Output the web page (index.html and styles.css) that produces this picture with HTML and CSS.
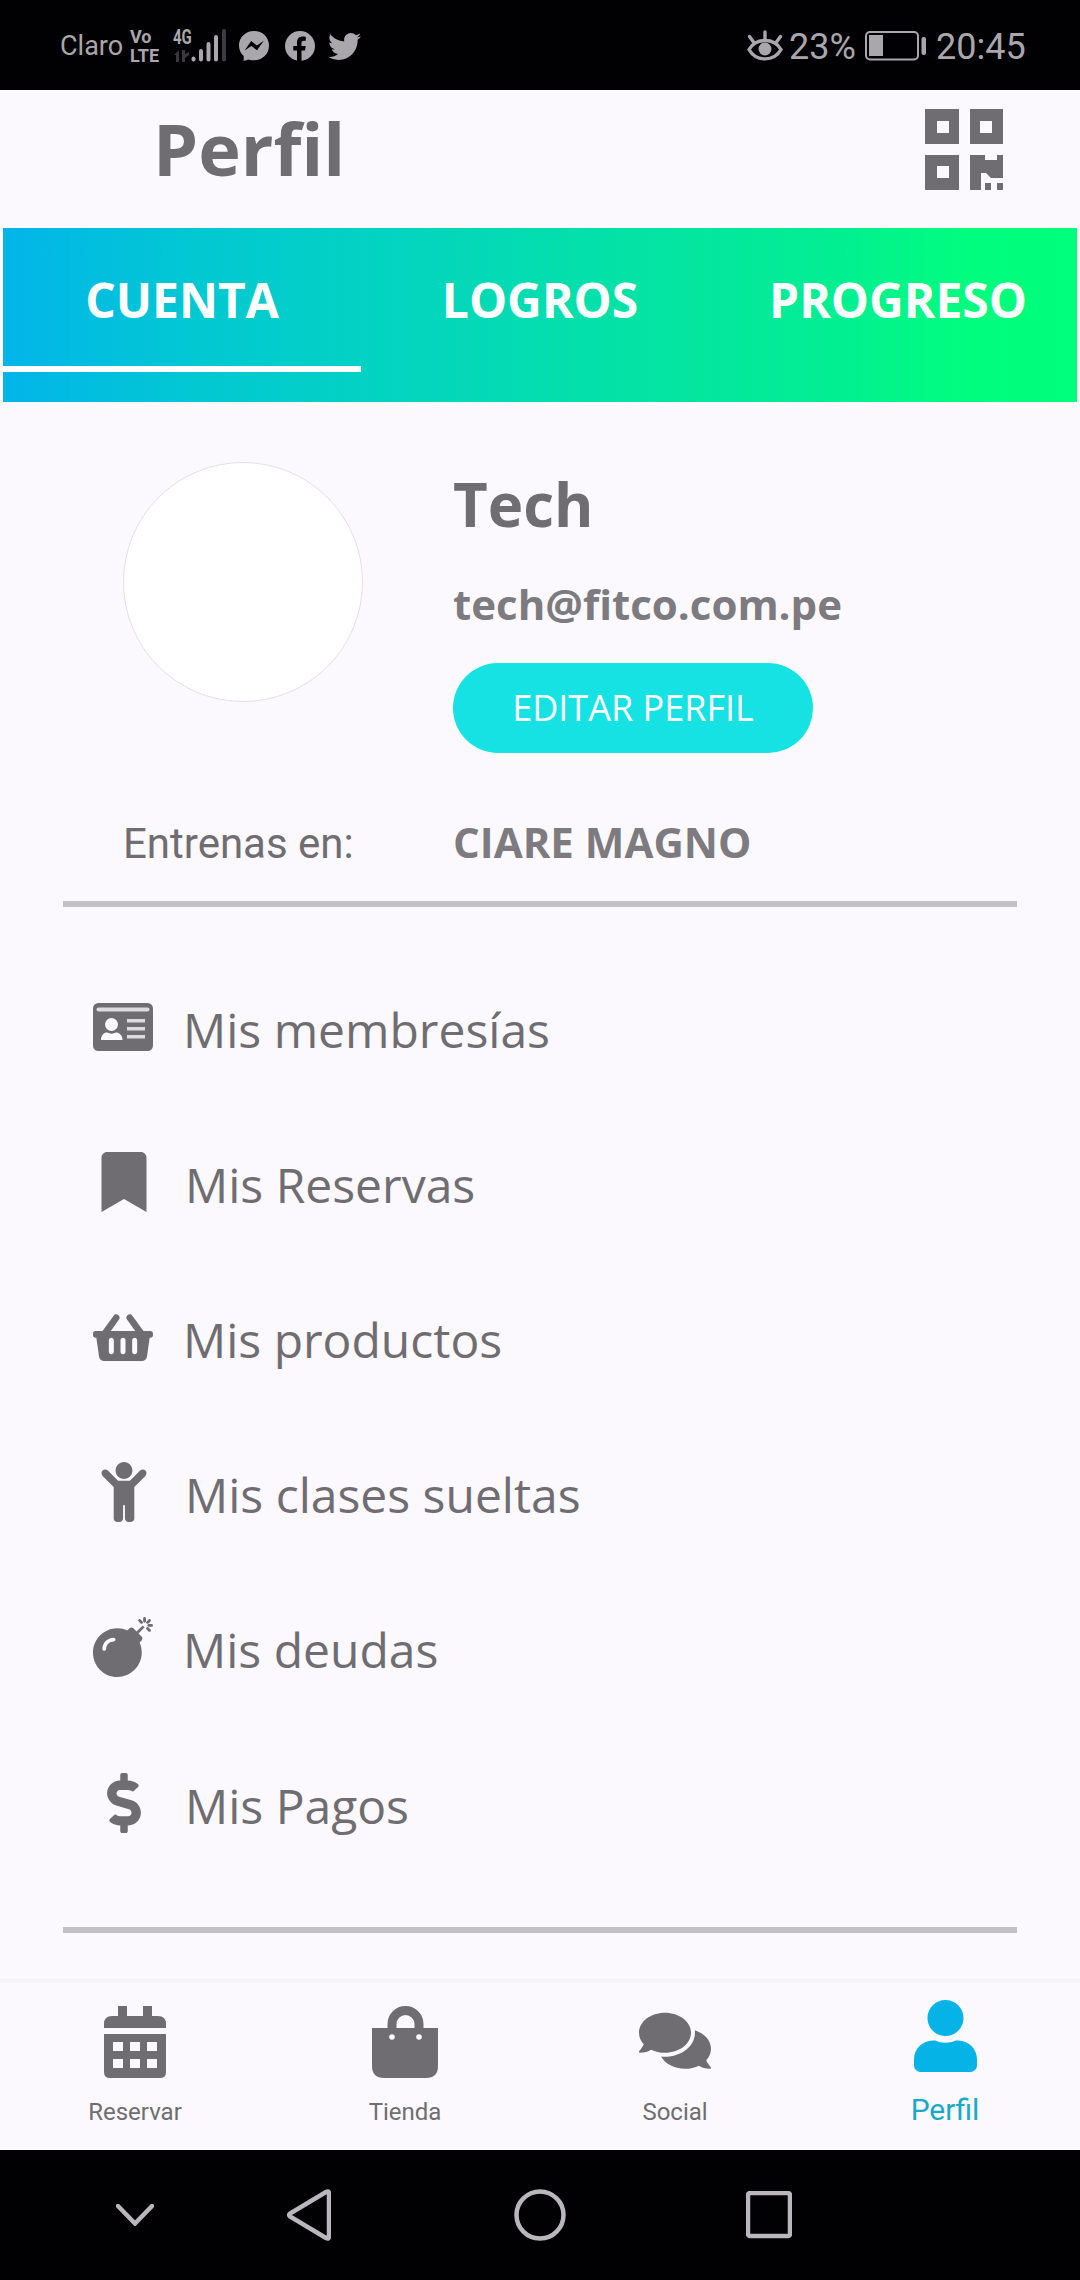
FILE: index.html
```html
<!DOCTYPE html>
<html lang="es">
<head>
<meta charset="utf-8">
<title>Perfil</title>
<link rel="stylesheet" href="styles.css">
</head>
<body>
<div class="status">
  <span class="carrier">Claro</span>
  <span class="volte"><span>Vo</span><span>LTE</span></span>
  <div class="signal">
    <span class="net">4G</span>
    <svg width="54" height="34" viewBox="0 0 54 34">
      <g fill="#39373b"><path d="M1 26l5-5v12h-3v-7z"/><path d="M9 21h3v4l4-2v3l-4 3v4H9z"/></g>
      <g stroke="#a9a7ab" stroke-width="4" stroke-linecap="round"><path d="M20.500 29.500v1M28 22v8.500M35.500 15v15.500M43 8v22.500"/><path d="M51 2v28.500" stroke="#3d3b3f"/></g>
    </svg>
  </div>
  <svg class="app-messenger" width="30" height="30" viewBox="0 0 30 30"><path fill="#a9a7ab" d="M15 0C6.500 0 0 6.200 0 14.500c0 4.300 1.800 8 4.700 10.600V30l4.800-1.600c1.700.6 3.500.9 5.500.9 8.500 0 15-6.300 15-14.800S23.500 0 15 0z"/><path fill="#000" d="M5.500 19.500l6.700-9.500 5.600 4.500 7-4.800-6.800 9.600-5.600-4.400z"/></svg>
  <svg class="app-facebook" width="30" height="30" viewBox="0 0 30 30"><circle cx="15" cy="15" r="15" fill="#a9a7ab"/><path fill="#000" d="M12 30V19.500H8.300V15H12v-3.500c0-4 2.300-6 5.800-6 1.500 0 3 .3 3 .3v3.900h-1.900c-1.900 0-2.400 1.100-2.400 2.300V15h4.200l-.7 4.500h-3.500V30z"/></svg>
  <svg class="app-twitter" width="33" height="33" viewBox="0 0 512 512"><path fill="#a9a7ab" d="M459.370 151.716c.325 4.548.325 9.097.325 13.645 0 138.720-105.583 298.558-298.558 298.558-59.452 0-114.680-17.219-161.137-47.106 8.447.974 16.568 1.299 25.340 1.299 49.055 0 94.213-16.568 130.274-44.832-46.132-.975-84.792-31.188-98.112-72.772 6.498.974 12.995 1.624 19.818 1.624 9.421 0 18.843-1.300 27.614-3.573-48.081-9.747-84.143-51.980-84.143-102.985v-1.299c13.969 7.797 30.214 12.670 47.431 13.319-28.264-18.843-46.781-51.005-46.781-87.391 0-19.492 5.197-37.360 14.294-52.954 51.655 63.675 129.300 105.258 216.365 109.807-1.624-7.797-2.599-15.918-2.599-24.040 0-57.828 46.782-104.934 104.934-104.934 30.213 0 57.502 12.670 76.670 33.137 23.715-4.548 46.456-13.320 66.599-25.340-7.798 24.366-24.366 44.833-46.132 57.827 21.117-2.273 41.584-8.122 60.426-16.243-14.292 20.791-32.161 39.308-52.628 54.253z"/></svg>
  <svg class="eye" width="36" height="32" viewBox="0 0 36 32"><g fill="none" stroke="#a9a7ab" stroke-width="3.400" stroke-linecap="round"><path d="M2 19.500C9 7.500 27 7.500 34 19.500 27 32 9 32 2 19.500z"/><path d="M18 2v7M2.500 6.500l4 5.500M33.500 6.500l-4 5.500"/></g><circle cx="18" cy="19" r="6.500" fill="#a9a7ab"/></svg>
  <span class="clock">23%</span>
  <svg class="battery" width="61" height="30" viewBox="0 0 61 30"><rect x="1" y="1" width="52" height="27.500" rx="4" fill="none" stroke="#a9a7ab" stroke-width="2"/><path fill="#a9a7ab" d="M4 4h14v21H4z"/><rect x="56.500" y="6" width="4.500" height="18" rx="2" fill="#a9a7ab"/></svg>
  <span class="clock time">20:45</span>
</div>

<header class="header">
  <h1>Perfil</h1>
  <svg class="qr" width="78" height="81" viewBox="0 0 78 81" fill="#6f6d71"><path fill-rule="evenodd" d="M0 0h34v35H0zM12 12v12h12V12zM45 0h33v35H45zM55 12v12h12V12zM0 46h34v35H0zM12 57v12h12V57z"/><path d="M45 46h15v5h12v-5h6v23H66l-5-5h-5v17H45zM60 74h6v7h-6zM72 74h6v7h-6z"/></svg>
</header>

<nav class="tabs">
  <span class="tab active">CUENTA</span>
  <span class="tab">LOGROS</span>
  <span class="tab">PROGRESO</span>
</nav>

<main class="content">
  <section class="profile">
    <div class="avatar"></div>
    <div class="info">
      <h2>Tech</h2>
      <p class="email">tech@fitco.com.pe</p>
      <button class="edit">EDITAR PERFIL</button>
    </div>
    <span class="train">Entrenas en:</span>
    <span class="gym">CIARE MAGNO</span>
  </section>
  <hr>
  <ul class="menu">
    <li><svg width="60" height="48" viewBox="0 0 60 48"><rect width="60" height="48" rx="5.500" fill="#6f6d71"/><g fill="#fbf9fd"><rect x="3.500" y="4.500" width="53" height="4" rx="2" fill="#dddbdf"/><circle cx="18.500" cy="21.500" r="6.500"/><path d="M8 37c0-5 3-7.500 6-7.500 3 1.500 6 1.500 9 0 3 0 6.500 2.500 6.500 7.500z"/><path d="M34 16h18v3.500H34zM34 24h18v3.500H34zM34 32h18v3.500H34z" fill="#dddbdf"/></g></svg>Mis membresías</li>
    <li><svg width="60" height="60" viewBox="-64 0 512 512"><path d="M0 512V48C0 21.490 21.490 0 48 0h288c26.510 0 48 21.490 48 48v464L192 400 0 512z"/></svg>Mis Reservas</li>
    <li><svg width="60" height="53.300" viewBox="0 0 576 512"><path d="M576 216v16c0 13.255-10.745 24-24 24h-8l-26.113 182.788C514.509 462.435 494.257 480 470.370 480H105.630c-23.887 0-44.139-17.565-47.518-41.212L32 256h-8c-13.255 0-24-10.745-24-24v-16c0-13.255 10.745-24 24-24h67.341l106.780-146.821c10.395-14.292 30.407-17.453 44.701-7.058 14.293 10.395 17.453 30.408 7.058 44.701L170.477 192h235.046L326.120 82.821c-10.395-14.292-7.234-34.306 7.059-44.701 14.291-10.395 34.306-7.235 44.701 7.058L484.659 192H552c13.255 0 24 10.745 24 24zM312 392V280c0-13.255-10.745-24-24-24s-24 10.745-24 24v112c0 13.255 10.745 24 24 24s24-10.745 24-24zm112 0V280c0-13.255-10.745-24-24-24s-24 10.745-24 24v112c0 13.255 10.745 24 24 24s24-10.745 24-24zm-224 0V280c0-13.255-10.745-24-24-24s-24 10.745-24 24v112c0 13.255 10.745 24 24 24s24-10.745 24-24z"/></svg>Mis productos</li>
    <li><svg width="60" height="60" viewBox="-64 0 512 512"><path d="M120 72c0-39.765 32.235-72 72-72s72 32.235 72 72c0 39.764-32.235 72-72 72s-72-32.236-72-72zm254.627 1.373c-12.496-12.497-32.758-12.497-45.254 0L242.745 160H141.254L54.627 73.373c-12.496-12.497-32.758-12.497-45.254 0-12.497 12.497-12.497 32.758 0 45.255L104 213.254V480c0 17.673 14.327 32 32 32h16c17.673 0 32-14.327 32-32V368h16v112c0 17.673 14.327 32 32 32h16c17.673 0 32-14.327 32-32V213.254l94.627-94.627c12.497-12.496 12.497-32.757 0-45.254z"/></svg>Mis clases sueltas</li>
    <li><svg width="60" height="60" viewBox="0 0 512 512"><path d="M440.500 88.500l-52 52L415 167c9.400 9.400 9.400 24.600 0 33.900l-17.400 17.400c11.800 26.100 18.400 55.100 18.400 85.600 0 114.900-93.100 208-208 208S0 418.900 0 304 93.100 96 208 96c30.500 0 59.500 6.600 85.600 18.400L311 97c9.400-9.400 24.600-9.400 33.900 0l26.500 26.500 52-52 17.100 17zM500 60h-24c-6.600 0-12 5.400-12 12s5.400 12 12 12h24c6.600 0 12-5.400 12-12s-5.400-12-12-12zM440 0c-6.600 0-12 5.400-12 12v24c0 6.600 5.400 12 12 12s12-5.400 12-12V12c0-6.600-5.400-12-12-12zm33.900 55l17-17c4.700-4.700 4.700-12.300 0-17-4.700-4.700-12.300-4.700-17 0l-17 17c-4.700 4.700-4.700 12.300 0 17 4.800 4.700 12.400 4.700 17 0zm-67.800 0c4.700 4.700 12.300 4.700 17 0 4.700-4.700 4.700-12.300 0-17l-17-17c-4.700-4.700-12.300-4.700-17 0-4.700 4.700-4.700 12.300 0 17l17 17zm67.800 34c-4.700-4.700-12.300-4.700-17 0-4.700 4.700-4.700 12.300 0 17l17 17c4.700 4.700 12.300 4.700 17 0 4.700-4.700 4.700-12.300 0-17l-17-17zM112 272c0-35.300 28.700-64 64-64 8.800 0 16-7.200 16-16s-7.200-16-16-16c-52.900 0-96 43.100-96 96 0 8.800 7.200 16 16 16s16-7.200 16-16z"/></svg>Mis deudas</li>
    <li><svg width="60" height="60" viewBox="-112 0 512 512"><path d="M209.200 233.400l-108-31.600C88.700 198.200 80 186.500 80 173.500c0-16.300 13.200-29.500 29.500-29.500h66.300c12.200 0 24.200 3.700 34.200 10.500 6.100 4.100 14.300 3.100 19.500-2l34.800-34c7.100-6.900 6.100-18.400-1.800-24.500C238 74.800 207.400 64.100 176 64V16c0-8.800-7.200-16-16-16h-32c-8.800 0-16 7.200-16 16v48h-2.500C45.800 64-5.400 118.700.5 183.600c4.200 46.100 39.400 83.600 83.800 96.600l102.500 30c12.500 3.700 21.200 15.300 21.200 28.300 0 16.300-13.200 29.500-29.500 29.500h-66.300C100 368 88 364.300 78 357.500c-6.100-4.100-14.300-3.100-19.500 2l-34.800 34c-7.100 6.900-6.100 18.400 1.800 24.500 24.500 19.200 55.100 29.900 86.500 30v48c0 8.800 7.200 16 16 16h32c8.800 0 16-7.200 16-16v-48.200c46.600-.9 90.300-28.600 105.700-72.700 21.500-61.600-14.600-124.800-72.500-141.700z"/></svg>Mis Pagos</li>
  </ul>
  <hr>
</main>

<nav class="bottom">
  <span class="item"><svg width="62" height="72" viewBox="0 0 62 72"><path fill-rule="evenodd" d="M14 0h9v10h16V0h9v10h6q8 0 8 8v4H0v-4q0-8 8-8h6zM0 28h62v38q0 6-6 6H6q-6 0-6-6zM9 36v9h10v-9zM26 36v9h10v-9zM43 36v9h10v-9zM9 53v9h10v-9zM26 53v9h10v-9zM43 53v9h10v-9z"/></svg>Reservar</span>
  <span class="item"><svg width="66" height="72" viewBox="0 0 66 72"><path d="M0 22h66v38q0 12-12 12H12Q0 72 0 60z"/><path d="M20 30V18a13.500 13.500 0 0 1 27 0v12" fill="none" stroke="#6f6d71" stroke-width="9"/><g fill="#fbf9fd"><circle cx="20" cy="31" r="2.800"/><circle cx="47" cy="31" r="2.800"/></g></svg>Tienda</span>
  <span class="item"><svg width="72" height="72" viewBox="0 -22 576 576"><path d="M416 192c0-88.400-93.100-160-208-160S0 103.600 0 192c0 34.300 14.100 65.900 38 92-13.400 30.200-35.500 54.200-35.800 54.500-2.200 2.300-2.800 5.700-1.500 8.700S4.800 352 8 352c36.600 0 66.900-12.300 88.700-25 32.200 15.700 70.300 25 111.300 25 114.900 0 208-71.600 208-160zm122 220c23.900-26 38-57.700 38-92 0-66.900-53.500-124.200-129.300-148.100.9 6.600 1.300 13.300 1.300 20.100 0 105.900-107.700 192-240 192-10.800 0-21.300-.8-31.700-1.900C207.800 439.600 281.800 480 368 480c41 0 79.100-9.200 111.300-25 21.800 12.700 52.100 25 88.700 25 3.200 0 6.100-1.900 7.300-4.800 1.300-2.900.7-6.300-1.500-8.700-.3-.3-22.400-24.200-35.800-54.500z"/></svg>Social</span>
  <span class="item active"><svg width="63" height="72" viewBox="0 0 448 512"><path d="M224 256c70.700 0 128-57.300 128-128S294.700 0 224 0 96 57.300 96 128s57.300 128 128 128zm89.600 32h-16.700c-22.200 10.200-46.900 16-72.900 16s-50.600-5.800-72.900-16h-16.700C60.200 288 0 348.200 0 422.400V464c0 26.500 21.500 48 48 48h352c26.500 0 48-21.500 48-48v-41.600c0-74.200-60.200-134.400-134.400-134.400z"/></svg>Perfil</span>
</nav>

<div class="system">
  <svg class="hide" width="38" height="22" viewBox="0 0 38 22"><path d="M2 2l17 17.500L36 2"/></svg>
  <svg class="back" width="44" height="52" viewBox="0 0 44 52"><path d="M39 3q3-1.500 3 1.500v43q0 3-3 1.500L3 27.500q-1.500-1.500 0-3z"/></svg>
  <svg class="home" width="52" height="52" viewBox="0 0 52 52"><circle cx="26" cy="26" r="23.500"/></svg>
  <svg class="recent" width="46" height="48" viewBox="0 0 46 48"><rect x="2" y="2" width="42" height="43" rx="2"/></svg>
</div>
</body>
</html>
```
FILE: styles.css
```css
* { box-sizing: border-box; margin: 0; padding: 0; }
body {
  width: 1080px;
  height: 2280px;
  display: flex;
  flex-direction: column;
  background: #fbf9fd;
  color: #6f6d71;
  font-family: "Open Sans", sans-serif;
  overflow: hidden;
}
svg { display: block; flex: none; }

.status {
  height: 90px;
  background: #010002;
  color: #a9a7ab;
  font-family: Roboto, sans-serif;
  display: flex;
  align-items: center;
  padding: 2px 0 0 60px;
}
.carrier { width: 70px; font-size: 27px; }
.volte {
  width: 42px;
  display: flex;
  flex-direction: column;
  font-size: 18px;
  font-weight: 700;
  line-height: 19px;
}
.signal { width: 67px; padding-left: 1px; display: flex; flex-direction: column; }
.net { height: 0; font-size: 20px; font-weight: 700; line-height: 16px; transform: scaleX(0.75); transform-origin: left; white-space: nowrap; }
.app-facebook { margin-left: 16px; }
.app-twitter { margin-left: 13px; }
.eye { margin-left: 386px; }
.clock { width: 76px; padding: 1px 0 0 6px; font-size: 36px; white-space: nowrap; }
.time { width: auto; padding-left: 10px; }
.battery { margin-left: 6px; }

.header {
  height: 138px;
  padding: 0 77px 0 153px;
  display: flex;
  justify-content: space-between;
  align-items: flex-start;
}
.header h1 { font-size: 72px; line-height: 116px; }
.qr { margin-top: 19px; }

.tabs {
  height: 174px;
  margin: 0 3px;
  display: grid;
  grid-template-columns: repeat(3, 1fr);
  align-items: start;
  background: linear-gradient(90deg, #02b5ea 0%, #02c8d2 18%, #03d2c3 34%, #04e2a6 58%, #02ee92 77%, #00fd7e 90%, #00ff7c 100%);
}
.tab {
  height: 144px;
  padding-top: 6px;
  border-bottom: 6px solid transparent;
  color: #fff;
  font-size: 48px;
  font-weight: 700;
  line-height: 132px;
  text-align: center;
}
.tab.active { border-color: #fff; }

.content { flex: 1; }
.profile {
  padding: 60px 0 0 123px;
  display: grid;
  grid-template-columns: 330px 1fr;
}
.avatar { width: 240px; height: 240px; border-radius: 50%; background: #fff; border: 1px solid #e2e0e5; }
.info { height: 291px; }
.info h2 { font-size: 60px; line-height: 84px; }
.email { margin-top: 29px; font-size: 42px; font-weight: 700; line-height: 58px; color: #7d7b7f; }
.edit {
  display: block;
  width: 360px;
  height: 90px;
  margin-top: 30px;
  border: 0;
  border-radius: 45px;
  background: #16e2e3;
  color: #fff;
  font: 36px/90px "Open Sans", sans-serif;
}
.train, .gym { margin-top: 59px; font-size: 42px; line-height: 60px; }
.train { padding-top: 2px; line-height: 58px; font-family: Roboto, sans-serif; }
.train { line-height: 60px; margin-bottom: -2px; }
.gym { font-weight: 700; color: #7d7b7f; }
hr { height: 6px; margin: 29px 63px 0; border: 0; background: #c3c1c5; }
.menu { list-style: none; padding: 45px 0 15px 93px; }
.menu li {
  height: 155.1px;
  display: flex;
  align-items: center;
  gap: 30px;
  font-size: 48px;
}
.menu li:nth-child(even) { padding-left: 1px; gap: 31px; }
.menu svg { margin-bottom: 5px; fill: #6f6d71; }

.bottom {
  height: 171px;
  border-top: 4px solid #f4f3f6;
  display: grid;
  grid-template-columns: repeat(4, 270px);
  font: 24px/32px Roboto, sans-serif;
}
.item {
  padding-top: 23px;
  display: flex;
  flex-direction: column;
  align-items: center;
  gap: 18px;
  fill: #6f6d71;
}
.item.active { padding-top: 17px; gap: 22px; font-size: 30px; color: #18a9c8; fill: #06b3e6; }

.system {
  height: 130px;
  background: #010002;
  display: flex;
  align-items: center;
  fill: none;
  stroke: #b9b7bb;
  stroke-width: 4.5;
  stroke-linecap: round;
}
.hide { margin-left: 116px; }
.back { margin-left: 133px; }
.home { margin-left: 183px; }
.recent { margin-left: 180px; }
```
